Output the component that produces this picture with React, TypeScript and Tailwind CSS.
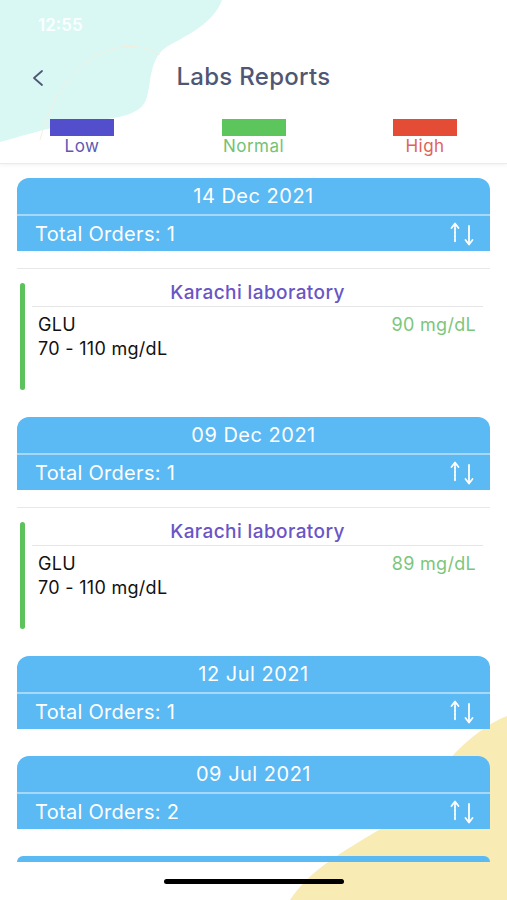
import React from "react";

type Report = {
	date: string;
	orders: number;
	lab?: { name: string; test: string; value: string; range: string };
};

const reports: Report[] = [
	{
		date: "14 Dec 2021",
		orders: 1,
		lab: { name: "Karachi laboratory", test: "GLU", value: "90 mg/dL", range: "70 - 110 mg/dL" },
	},
	{
		date: "09 Dec 2021",
		orders: 1,
		lab: { name: "Karachi laboratory", test: "GLU", value: "89 mg/dL", range: "70 - 110 mg/dL" },
	},
	{ date: "12 Jul 2021", orders: 1 },
	{ date: "09 Jul 2021", orders: 2 },
];

function SortIcon() {
	return (
		<svg width="28" height="26" viewBox="0 0 28 26" fill="none" stroke="white" strokeWidth="1.8" strokeLinecap="round">
			<path d="M7 3 V21" strokeDasharray="2.5 1.2" />
			<path d="M3.5 7 L7 2.5 L10.5 7" strokeLinejoin="round" />
			<path d="M21 5 V23" />
			<path d="M17.5 19 L21 23.5 L24.5 19" strokeLinejoin="round" />
		</svg>
	);
}

function ReportCard({ report }: { report: Report }) {
	return (
		<div className="mb-[27px]">
			<div className="rounded-t-[12px] bg-[#5bb9f4] text-white">
				<div className="flex h-[36px] items-center justify-center text-[20px] tracking-[0.5px]">{report.date}</div>
				<div className="flex h-[37px] items-center justify-between border-t-2 border-[#a8d8f8] pl-[18px] pr-[14px] text-[20px] tracking-[0.3px]">
					<span>Total Orders: {report.orders}</span>
					<SortIcon />
				</div>
			</div>
			{report.lab && (
				<div className="pt-[17px]">
					<div className="flex border-t border-[#e8e8e8] pt-[14px]">
						<div className="ml-[3px] h-[107px] w-[5px] rounded-full bg-[#5cc35c]" />
						<div className="ml-[7px] mr-[7px] flex-1">
							<div className="h-[24px] border-b border-[#e6e6e6] text-center text-[19px] font-medium leading-[20px] tracking-[0.4px] text-[#6a55c6]">
								{report.lab.name}
							</div>
							<div className="mt-[8px] flex justify-between pl-[6px] pr-[7px] text-[18px] leading-[20px] tracking-[0.3px]">
								<span className="text-[#111]">{report.lab.test}</span>
								<span className="text-[#7cc67c]">{report.lab.value}</span>
							</div>
							<div className="mt-[4px] pl-[6px] text-[18px] leading-[20px] tracking-[0.3px] text-[#111]">
								{report.lab.range}
							</div>
						</div>
					</div>
				</div>
			)}
		</div>
	);
}

export default function App() {
	return (
		<div className="relative h-[900px] w-[507px] overflow-hidden bg-white font-['Inter','Liberation_Sans',sans-serif]">
			{/* background blobs */}
			<svg className="absolute left-0 top-0" width="240" height="150" viewBox="0 0 240 150">
				<path
					d="M0 0 H222 C214 22 190 34 168 46 C148 58 152 84 146 100 C138 118 112 118 72 124 C42 129 16 138 0 142 Z"
					fill="#d9f7f3"
				/>
				<path d="M40 140 C60 60 120 30 160 55" stroke="#f3efe0" strokeWidth="1" fill="none" />
			</svg>
			<svg className="absolute bottom-0 right-0" width="227" height="190" viewBox="280 710 227 190">
				<path
					d="M507 716 C490 722 470 738 456 752 C440 770 420 804 382 828 C342 852 310 870 290 900 H507 Z"
					fill="#f8ebb3"
				/>
			</svg>

			<div className="relative flex h-full flex-col">
				<div className="flex h-[52px] items-center pl-[38px] text-[17px] font-semibold text-white/90">12:55</div>

				<div className="relative flex h-[50px] items-center justify-center">
					<svg className="absolute left-[31px] top-[17px]" width="14" height="18" viewBox="0 0 14 18" fill="none">
						<path d="M11 2 L3 9 L11 16" stroke="#4f5774" strokeWidth="1.8" strokeLinecap="round" strokeLinejoin="round" />
					</svg>
					<span className="text-[24px] font-medium tracking-[0.3px] text-[#4f5774]">Labs Reports</span>
				</div>

				<div className="flex justify-between border-b border-[#ebebeb] px-[50px] pb-[7px] pt-[17px] shadow-[0_2px_3px_rgba(0,0,0,0.04)]">
					<div className="flex w-[64px] flex-col items-center">
						<div className="h-[17px] w-[64px] bg-[#534fcc]" />
						<span className="text-[17px] leading-[20px] tracking-[0.5px] text-[#6058b4]">Low</span>
					</div>
					<div className="flex w-[64px] flex-col items-center">
						<div className="h-[17px] w-[64px] bg-[#5cc55c]" />
						<span className="text-[17px] leading-[20px] tracking-[0.5px] text-[#74c274]">Normal</span>
					</div>
					<div className="flex w-[64px] flex-col items-center">
						<div className="h-[17px] w-[64px] bg-[#e44c36]" />
						<span className="text-[17px] leading-[20px] tracking-[0.5px] text-[#e0625a]">High</span>
					</div>
				</div>

				<div className="h-[699px] overflow-hidden px-[17px] pt-[14px]">
					{reports.map((r) => (
						<ReportCard key={r.date} report={r} />
					))}
					<div className="h-[6px] rounded-t-[12px] bg-[#5bb9f4]" />
				</div>

				<div className="flex flex-1 items-center justify-center">
					<div className="h-[5px] w-[180px] rounded-full bg-black" />
				</div>
			</div>
		</div>
	);
}
